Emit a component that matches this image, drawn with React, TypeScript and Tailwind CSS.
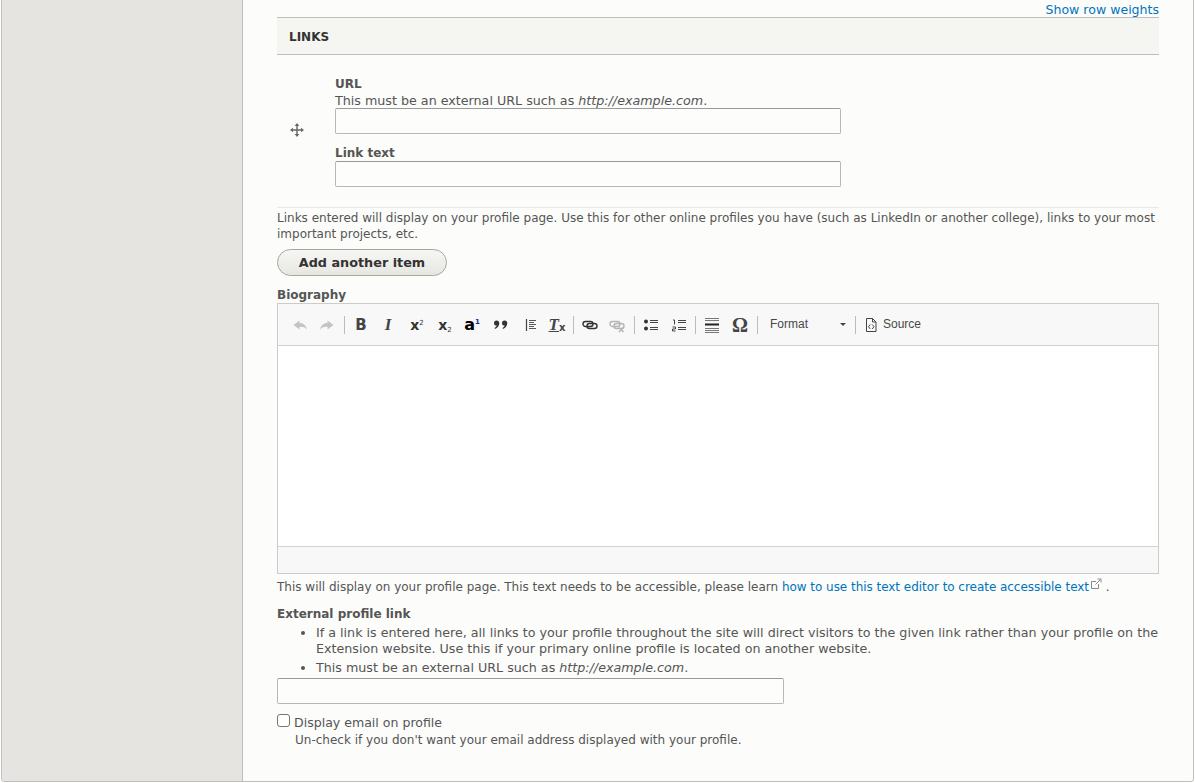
import React from "react";

const labelCls = "block font-bold text-[#555] leading-[16px]";
const inputCls = "block h-[26px] bg-[#fdfdfc] border border-[#b8b8b8] border-t-[#999] rounded-[2px]";

// CKEditor toolbar drawings, 16x16
const Undo = () => (
  <svg width="16" height="16" viewBox="0 0 16 16" className="text-[#c4c4c4]">
    <path d="M1.5 8 L7.5 3.5 V6 C11.5 6 14 8.5 15 12.5 C13 10.2 11 9.6 7.5 9.7 V12.5 Z" fill="currentColor" />
  </svg>
);
const Redo = () => (
  <svg width="16" height="16" viewBox="0 0 16 16" className="text-[#c4c4c4]">
    <path d="M14.5 8 L8.5 3.5 V6 C4.5 6 2 8.5 1 12.5 C3 10.2 5 9.6 8.5 9.7 V12.5 Z" fill="currentColor" />
  </svg>
);
const Sep = ({ ml }: { ml: string }) => <div className={`w-px h-[18px] bg-[#bcbcbc] ${ml}`} />;
const Quote = () => (
  <svg width="16" height="16" viewBox="0 0 16 16" fill="#333">
    <circle cx="3.6" cy="6" r="2.6" />
    <path d="M6.2 6 C6.2 9 4.5 11 2 12 L1.6 11 C3 10.2 3.8 9 3.8 7.5 Z" />
    <circle cx="11.6" cy="6" r="2.6" />
    <path d="M14.2 6 C14.2 9 12.5 11 10 12 L9.6 11 C11 10.2 11.8 9 11.8 7.5 Z" />
  </svg>
);
const Indent = () => (
  <svg width="16" height="16" viewBox="0 0 16 16" fill="none" stroke="#444">
    <path d="M3.5 2 V14" strokeWidth="1.2" />
    <path d="M6 3.5 H13 M6 5.5 H11 M6 7.5 H13 M6 9.5 H11 M6 11.5 H13" strokeWidth="0.9" />
  </svg>
);
const Chain = ({ muted }: { muted?: boolean }) => (
  <svg width="16" height="16" viewBox="0 0 16 16" fill="none" stroke={muted ? "#b5b5b5" : "#333"} strokeWidth="1.4">
    <rect x="1" y="4.5" width="10" height="5" rx="2.5" />
    <rect x="5" y="6.5" width="10" height="5" rx="2.5" />
    {muted && <path d="M10 10.5 L14.5 15 M14.5 10.5 L10 15" strokeWidth="1.4" />}
  </svg>
);
const Bullets = () => (
  <svg width="16" height="16" viewBox="0 0 16 16">
    <circle cx="3" cy="4.5" r="2" fill="#333" />
    <circle cx="3" cy="11.5" r="2" fill="#333" />
    <path d="M7 3.5 H15 M7 5.5 H15 M7 10.5 H15 M7 12.5 H15" stroke="#444" strokeWidth="1" />
  </svg>
);
const Numbers = () => (
  <svg width="16" height="16" viewBox="0 0 16 16" fill="none" stroke="#444" strokeWidth="1">
    <path d="M2 3 H3.5 V7.5" />
    <path d="M1.5 10 H4.5 V12 H1.5 V14 H4.5" />
    <path d="M7 3.5 H15 M7 5.5 H15 M7 10.5 H15 M7 12.5 H15" />
  </svg>
);
const HRule = () => (
  <svg width="16" height="16" viewBox="0 0 16 16" fill="none" stroke="#777">
    <path d="M1 1.5 H15 M1 3.5 H15 M1 11.5 H15 M1 13.5 H15 M1 15.5 H15" strokeWidth="1" />
    <path d="M1 7.5 H15" stroke="#222" strokeWidth="2" />
  </svg>
);
const SourceIcon = () => (
  <svg width="14" height="16" viewBox="0 0 14 16" fill="none" stroke="#444">
    <path d="M2.5 1.5 H8.5 L12 5 V14.5 H2.5 Z M8.5 1.5 V5 H12" strokeWidth="1" />
    <path d="M6.3 7.5 L4.5 9.7 L6.3 12 M8.2 7.5 L10 9.7 L8.2 12" strokeWidth="1" />
  </svg>
);
const Move = () => (
  <svg width="14" height="14" viewBox="0 0 14 14" fill="#666">
    <path d="M7 0 L9.3 3 H7.7 V6.3 H11 V4.7 L14 7 L11 9.3 V7.7 H7.7 V11 H9.3 L7 14 L4.7 11 H6.3 V7.7 H3 V9.3 L0 7 L3 4.7 V6.3 H6.3 V3 H4.7 Z" />
  </svg>
);
const ExternalMark = () => (
  <svg width="12" height="12" viewBox="0 0 12 12" fill="none" stroke="#8a8a8a" className="inline-block align-[1px] ml-px">
    <path d="M8.5 6 V10.5 H1.5 V3.5 H6" strokeWidth="1" />
    <path d="M5.5 6.5 L10.5 1.5 M7.5 1 H11 V4.5" strokeWidth="1" />
  </svg>
);

const Btn = ({ ml, children }: { ml: string; children: React.ReactNode }) => (
  <div className={`flex items-center justify-center w-[16px] h-[20px] whitespace-nowrap ${ml}`}>{children}</div>
);

export default function App() {
  return (
    <div className="w-[1195px] h-[783px] overflow-hidden bg-white pl-px pr-px pb-px font-['DejaVu_Sans',sans-serif] text-[12px] text-[#555]">
      <div className="flex h-[782px] border-b border-r border-l border-[#bebebe] rounded-b-[4px] overflow-hidden">
        <aside className="w-[241px] shrink-0 bg-[#e5e4e0] border-r border-[#bebebe]" />
        <main className="flex-1 bg-[#fcfcfa] pl-[34px] pr-[34px]">
          <div className="h-[17px] text-right leading-[20px] text-[12.55px] text-[#0074bd]">Show row weights</div>

          <div className="h-[38px] flex items-center pl-[12px] pt-[2px] bg-[#f5f5f2] border-y border-[#bebebe] font-bold text-[#333] text-[12px]">LINKS</div>

          <div className="flex h-[153px] border-b border-[#e8e8e8]">
            <div className="w-[58px] pl-[13px] pt-[68px] shrink-0"><Move /></div>
            <div className="pt-[21px] w-[506px]">
              <label className={labelCls}>URL</label>
              <div className="leading-[16px] text-[12.7px] pt-px -mb-px">This must be an external URL such as <em>http://example.com</em>.</div>
              <div className={`${inputCls} w-[506px]`} />
              <label className={`${labelCls} mt-[11px]`}>Link text</label>
              <div className={`${inputCls} w-[506px]`} />
            </div>
          </div>

          <p className="mt-[2px] leading-[16px]">Links entered will display on your profile page. Use this for other online profiles you have (such as LinkedIn or another college), links to your most important projects, etc.</p>

          <button className="block mt-[7px] w-[170px] h-[27px] rounded-[14px] border border-[#a6a6a0] bg-gradient-to-b from-[#f6f6f3] to-[#e7e7e2] text-[#333] font-bold text-[12.8px] leading-[24px]">Add another item</button>

          <label className={`${labelCls} mt-[11px]`}>Biography</label>

          <div className="border border-[#cbcbcb] bg-white">
            <div className="h-[42px] flex items-center pl-[14px] bg-[#f8f8f8] border-b border-[#d1d1d1]">
              <Btn ml=""><Undo /></Btn>
              <Btn ml="ml-[11px]"><Redo /></Btn>
              <Sep ml="ml-[9px]" />
              <Btn ml="ml-[8px]"><span className="font-bold text-[15px] text-[#444] leading-none pt-px">B</span></Btn>
              <Btn ml="ml-[11px]"><span className="font-['Liberation_Serif',serif] font-bold italic text-[17px] text-[#444]">I</span></Btn>
              <Btn ml="ml-[13px]"><span className="font-bold text-[14px] text-[#333] leading-none">x<sup className="text-[7px] font-normal -top-[5px]">2</sup></span></Btn>
              <Btn ml="ml-[12px]"><span className="font-bold text-[14px] text-[#333] leading-none">x<sub className="text-[7px] font-normal -bottom-[2px]">2</sub></span></Btn>
              <Btn ml="ml-[11px]"><span className="font-bold text-[16px] text-black leading-none">a<sup className="text-[7px] font-bold text-[#22228a] -top-[6px]">1</sup></span></Btn>
              <Btn ml="ml-[13px]"><Quote /></Btn>
              <Btn ml="ml-[14px]"><Indent /></Btn>
              <Btn ml="ml-[10px]"><span className="font-['Liberation_Serif',serif] font-bold italic text-[17px] text-[#444] leading-none"><span className="underline">T</span><sub className="not-italic font-['DejaVu_Sans',sans-serif] text-[10px] -bottom-[1px]">x</sub></span></Btn>
              <Sep ml="ml-[8px]" />
              <Btn ml="ml-[8px]"><Chain /></Btn>
              <Btn ml="ml-[11px]"><Chain muted /></Btn>
              <Sep ml="ml-[9px]" />
              <Btn ml="ml-[8px]"><Bullets /></Btn>
              <Btn ml="ml-[12px]"><Numbers /></Btn>
              <Sep ml="ml-[8px]" />
              <Btn ml="ml-[8px]"><HRule /></Btn>
              <Btn ml="ml-[12px]"><span className="font-['Liberation_Serif',serif] font-bold text-[20px] text-[#444] leading-none">Ω</span></Btn>
              <Sep ml="ml-[9px]" />
              <div className="ml-[12px] w-[76px] flex items-center justify-between font-['Liberation_Sans',sans-serif] text-[12px] text-[#484848] -mt-[2px]">
                <span>Format</span>
                <span className="w-0 h-0 border-x-[3px] border-x-transparent border-t-[3px] border-t-[#444] mt-[2px]" />
              </div>
              <Sep ml="ml-[9px]" />
              <div className="ml-[8px] flex items-center gap-[5px] font-['Liberation_Sans',sans-serif] text-[12px] text-[#484848]"><SourceIcon /><span className="-mt-[2px]">Source</span></div>
            </div>
            <div className="h-[200px] bg-white" />
            <div className="h-[27px] bg-[#f8f8f8] border-t border-[#d1d1d1]" />
          </div>

          <p className="mt-[4px] leading-[16px]">This will display on your profile page. This text needs to be accessible, please learn <span className="text-[#0074bd] tracking-[-0.04px]">how to use this text editor to create accessible text<ExternalMark /></span> .</p>

          <label className={`${labelCls} mt-[11px]`}>External profile link</label>
          <ul className="list-disc pl-[39px] mt-[3px] leading-[16px] text-[12.7px]">
            <li>If a link is entered here, all links to your profile throughout the site will direct visitors to the given link rather than your profile on the Extension website. Use this if your primary online profile is located on another website.</li>
            <li className="mt-[3px]">This must be an external URL such as <em>http://example.com</em>.</li>
          </ul>
          <div className={`${inputCls} w-[507px] mt-[2px]`} />

          <div className="flex items-start mt-[10px] h-[16px]">
            <span className="w-[13px] h-[13px] border border-[#767676] rounded-[3px] bg-white" />
            <span className="ml-[4px] pt-px leading-[16px] text-[12.55px]">Display email on profile</span>
          </div>
          <div className="pl-[18px] mt-[2px] leading-[16px]">Un-check if you don't want your email address displayed with your profile.</div>
        </main>
      </div>
    </div>
  );
}
